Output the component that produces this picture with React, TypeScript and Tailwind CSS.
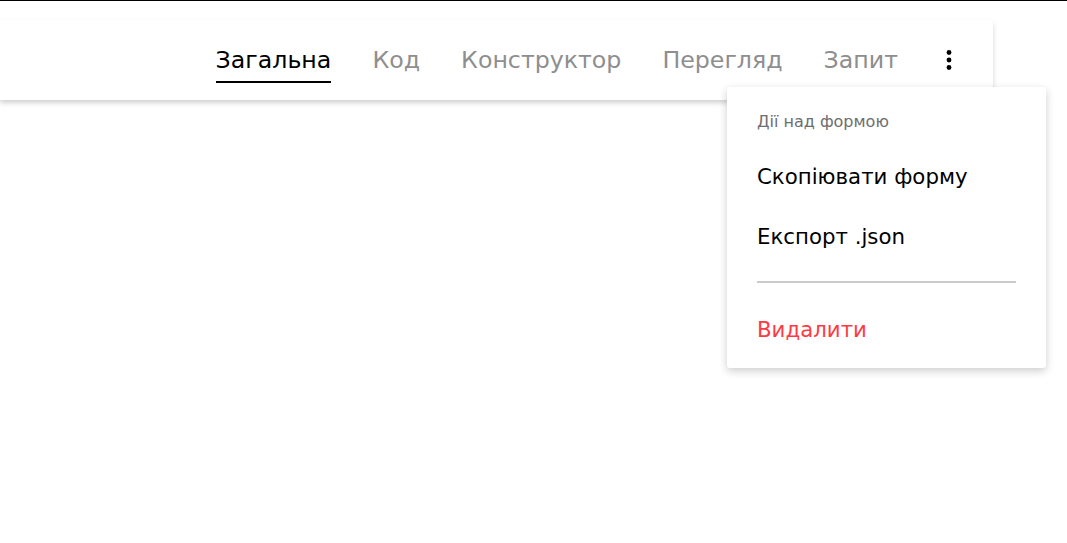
import React from "react"

const tabs = ["Загальна", "Код", "Конструктор", "Перегляд", "Запит"]

function Kebab() {
  return (
    <svg width="10" height="24" viewBox="0 0 10 24" className="block">
      <circle cx="5" cy="4.5" r="2.4" fill="#000" />
      <circle cx="5" cy="12" r="2.4" fill="#000" />
      <circle cx="5" cy="19.5" r="2.4" fill="#000" />
    </svg>
  )
}

export default function App() {
  return (
    <div
      className="relative w-[1067px] h-[543px] bg-white overflow-hidden border-t border-black"
      style={{ fontFamily: "'DejaVu Sans', 'Noto Sans', sans-serif" }}
    >
      <div className="pt-[19px] mr-[74px]">
        {/* header tabs */}
        <div className="h-[80px] bg-white rounded-r-[4px] shadow-[0_3px_5px_rgba(0,0,0,0.18)] flex items-center justify-end pr-[39px]">
          <div className="flex items-center gap-[41px]">
            {tabs.map((t, i) => (
              <div key={t} className="relative">
                <span
                  className={
                    "text-[23.7px] leading-[30px] " +
                    (i === 0 ? "text-black" : "text-[#8e8e8e]")
                  }
                >
                  {t}
                </span>
                {i === 0 && (
                  <div className="absolute left-0 right-0 -bottom-[8px] h-[2px] bg-black" />
                )}
              </div>
            ))}
            <div className="ml-[5px]">
              <Kebab />
            </div>
          </div>
        </div>
      </div>

      {/* dropdown menu */}
      <div className="absolute left-[727px] top-[86px] w-[319px] bg-white rounded-[3px] shadow-[0_3px_8px_rgba(0,0,0,0.2)] px-[30px] pt-[25px] pb-[8px]">
        <div className="h-[20px] mb-[15px] flex items-center text-[16px] text-[#6e6e6e]">Дії над формою</div>
        <div className="h-[60px] flex items-center text-[21.3px] text-black">Скопіювати форму</div>
        <div className="h-[60px] flex items-center text-[21.3px] text-black">Експорт .json</div>
        <div className="mt-[14px] h-[2px] bg-[#cbcbcb]" />
        <div className="mt-[17px] h-[60px] flex items-center text-[21.3px] text-[#ff3a44]">Видалити</div>
      </div>
    </div>
  )
}
